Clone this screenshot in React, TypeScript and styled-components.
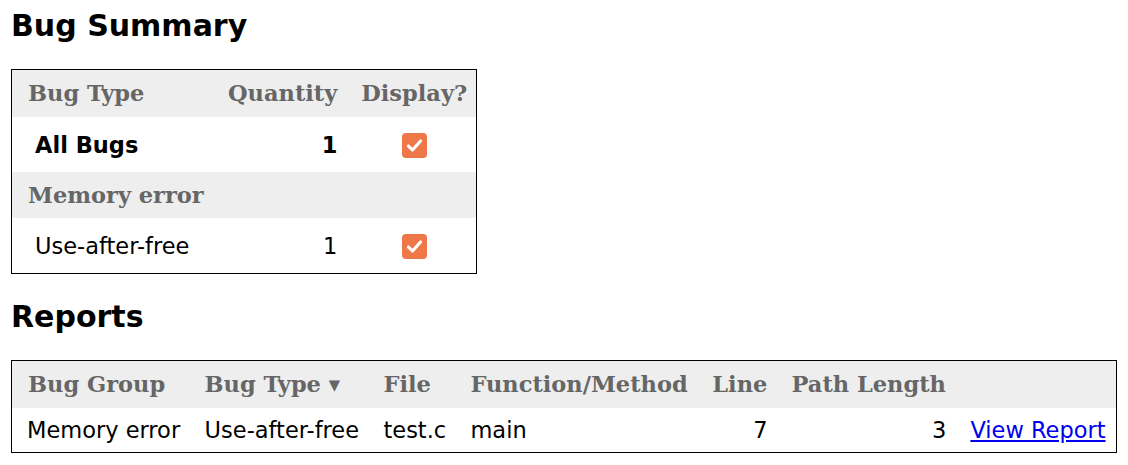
import styled, { createGlobalStyle } from "styled-components"

const GlobalStyle = createGlobalStyle`
  body {
    margin: 0;
    background: #ffffff;
    color: #000000;
    font-family: "DejaVu Sans", sans-serif;
    font-size: 22.5px;
  }
`

const Page = styled.div`
  display: flex;
  flex-direction: column;
  align-items: flex-start;
  padding: 8px 11px 0 11px;
`

const SectionTitle = styled.h2`
  margin: 0 0 26px 0;
  font-size: 30px;
  font-weight: bold;
  line-height: 35px;
`

const Table = styled.table<{ $full?: boolean }>`
  border: 1px solid #000000;
  border-collapse: collapse;
  border-spacing: 0;
  width: ${(p) => (p.$full ? "1106px" : "auto")};
  margin-bottom: 25px;
`

const HeadRow = styled.tr`
  background: #eeeeee;
`

const HeadCell = styled.th<{ $align?: string; $width?: string }>`
  font-family: "DejaVu Serif", serif;
  font-weight: bold;
  color: #666666;
  text-align: ${(p) => p.$align || "left"};
  width: ${(p) => p.$width || "auto"};
  padding: 10px 12px 11px 12px;
  line-height: 26px;
  white-space: nowrap;
  &:first-child {
    padding-left: 16px;
  }
  &:last-child {
    padding-right: 9px;
  }
`

const GroupCell = styled(HeadCell)`
  padding-top: 10px;
  padding-bottom: 10px;
`

const Cell = styled.td<{ $align?: string; $bold?: boolean; $indent?: boolean }>`
  text-align: ${(p) => p.$align || "left"};
  font-weight: ${(p) => (p.$bold ? "bold" : "normal")};
  padding: 9px 12px;
  line-height: 26px;
  white-space: nowrap;
  &:first-child {
    padding-left: ${(p) => (p.$indent ? "23px" : "15px")};
  }
  &:last-child {
    padding-right: 10px;
  }
`

const CheckCell = styled.td`
  text-align: center;
  padding: 9px 9px 9px 12px;
  line-height: 37px;
`

const Check = styled.span`
  display: inline-flex;
  align-items: center;
  justify-content: center;
  vertical-align: middle;
  width: 25px;
  height: 25px;
  border-radius: 4px;
  background: #ef7848;
`

const ReportLink = styled.a`
  color: #0000ee;
  text-decoration: underline;
`

const Checkbox = () => (
  <Check>
    <svg width="21" height="21" viewBox="0 0 16 16">
      <path d="M3.4 8.4 L6.5 11.4 L12.6 4.6" fill="none" stroke="#ffffff" strokeWidth="2.4" strokeLinecap="round" strokeLinejoin="round" />
    </svg>
  </Check>
)

const App = () => {
  return (
    <Page>
      <GlobalStyle />
      <SectionTitle>Bug Summary</SectionTitle>
      <Table>
        <thead>
          <HeadRow>
            <HeadCell $width="176px">Bug Type</HeadCell>
            <HeadCell>Quantity</HeadCell>
            <HeadCell>Display?</HeadCell>
          </HeadRow>
        </thead>
        <tbody>
          <tr>
            <Cell $bold $indent>All Bugs</Cell>
            <Cell $bold $align="right">1</Cell>
            <CheckCell><Checkbox /></CheckCell>
          </tr>
          <HeadRow>
            <GroupCell colSpan={3}>Memory error</GroupCell>
          </HeadRow>
          <tr>
            <Cell $indent>Use-after-free</Cell>
            <Cell $align="right">1</Cell>
            <CheckCell><Checkbox /></CheckCell>
          </tr>
        </tbody>
      </Table>

      <SectionTitle>Reports</SectionTitle>
      <Table $full>
        <thead>
          <HeadRow>
            <HeadCell>Bug Group</HeadCell>
            <HeadCell>Bug Type ▾</HeadCell>
            <HeadCell>File</HeadCell>
            <HeadCell>Function/Method</HeadCell>
            <HeadCell>Line</HeadCell>
            <HeadCell>Path Length</HeadCell>
            <HeadCell></HeadCell>
          </HeadRow>
        </thead>
        <tbody>
          <tr>
            <Cell>Memory error</Cell>
            <Cell>Use-after-free</Cell>
            <Cell>test.c</Cell>
            <Cell>main</Cell>
            <Cell $align="right">7</Cell>
            <Cell $align="right">3</Cell>
            <Cell><ReportLink href="#">View Report</ReportLink></Cell>
          </tr>
        </tbody>
      </Table>
    </Page>
  )
}

export default App
